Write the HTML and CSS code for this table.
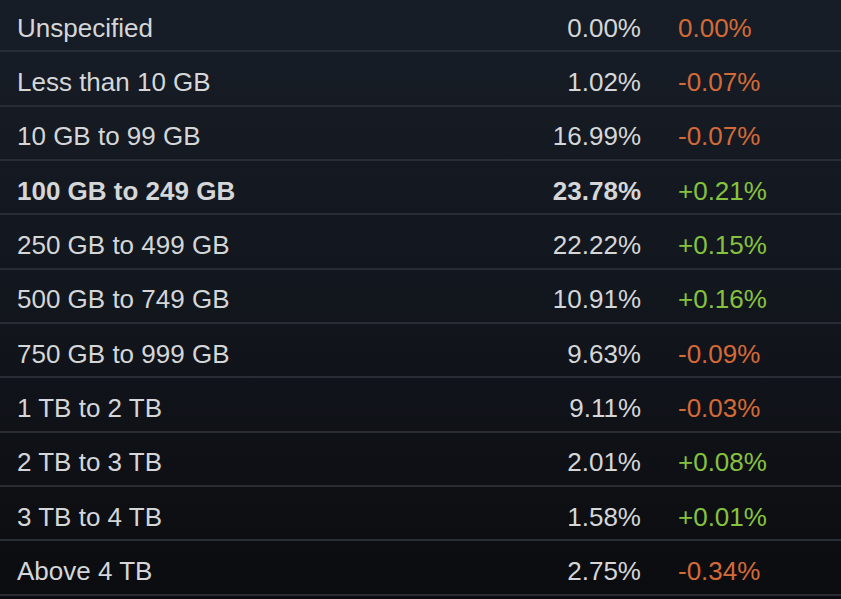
FILE: index.html
```html
<!DOCTYPE html>
<html>
<head>
<meta charset="utf-8">
<link rel="stylesheet" href="styles.css">
</head>
<body>
<div class="table">
  <div class="row"><span class="label">Unspecified</span><span class="pct">0.00%</span><span class="chg down">0.00%</span></div>
  <div class="row"><span class="label">Less than 10 GB</span><span class="pct">1.02%</span><span class="chg down">-0.07%</span></div>
  <div class="row"><span class="label">10 GB to 99 GB</span><span class="pct">16.99%</span><span class="chg down">-0.07%</span></div>
  <div class="row bold"><span class="label">100 GB to 249 GB</span><span class="pct">23.78%</span><span class="chg up">+0.21%</span></div>
  <div class="row"><span class="label">250 GB to 499 GB</span><span class="pct">22.22%</span><span class="chg up">+0.15%</span></div>
  <div class="row"><span class="label">500 GB to 749 GB</span><span class="pct">10.91%</span><span class="chg up">+0.16%</span></div>
  <div class="row"><span class="label">750 GB to 999 GB</span><span class="pct">9.63%</span><span class="chg down">-0.09%</span></div>
  <div class="row"><span class="label">1 TB to 2 TB</span><span class="pct">9.11%</span><span class="chg down">-0.03%</span></div>
  <div class="row"><span class="label">2 TB to 3 TB</span><span class="pct">2.01%</span><span class="chg up">+0.08%</span></div>
  <div class="row"><span class="label">3 TB to 4 TB</span><span class="pct">1.58%</span><span class="chg up">+0.01%</span></div>
  <div class="row"><span class="label">Above 4 TB</span><span class="pct">2.75%</span><span class="chg down">-0.34%</span></div>
</div>
</body>
</html>
```
FILE: styles.css
```css
html, body {
  margin: 0;
  padding: 0;
  height: 100%;
  overflow: hidden;
}
body {
  background: linear-gradient(to bottom, #171d27 0%, #12161d 50%, #0b0c0f 100%);
  font-family: "Liberation Sans", Arial, sans-serif;
  font-size: 26px;
  color: #d4d6d8;
}
.table {
  margin-top: -2px;
}
.row {
  display: grid;
  grid-template-columns: 1fr 130px 163px;
  column-gap: 37px;
  align-items: center;
  padding-top: 8px;
  box-sizing: content-box;
  height: 44.35px;
  border-bottom: 2px solid #282d35;
}
.label {
  padding-left: 17px;
}
.pct {
  text-align: right;
}
.chg.down { color: #d46a37; }
.chg.up { color: #86c23e; }
.bold .label, .bold .pct {
  font-weight: bold;
}
```
